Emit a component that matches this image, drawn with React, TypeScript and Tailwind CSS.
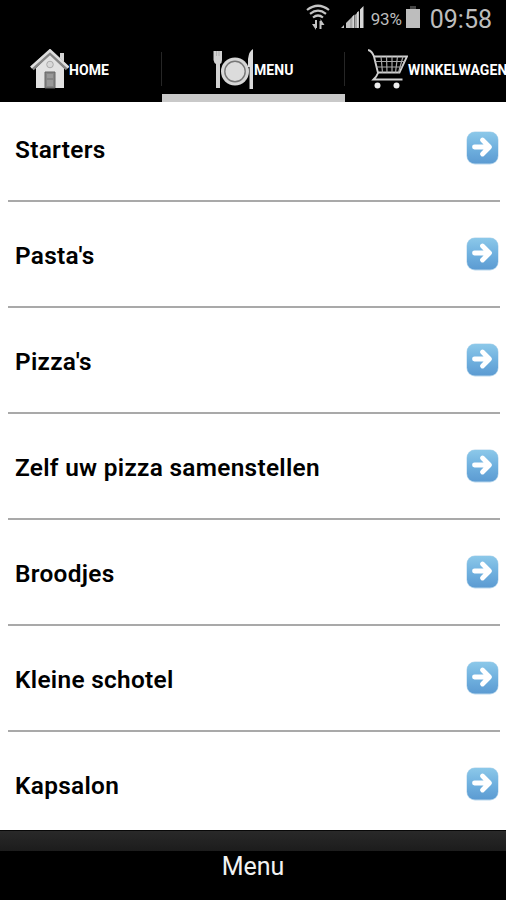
import clsx from 'clsx'
import type { ReactNode } from 'react'

const CATEGORIES = [
  'Starters',
  "Pasta's",
  "Pizza's",
  'Zelf uw pizza samenstellen',
  'Broodjes',
  'Kleine schotel',
  'Kapsalon',
]

export default function App() {
  return (
    <div className="flex h-[900px] w-[506px] flex-col overflow-hidden bg-white font-['Roboto',sans-serif]">
      <header className="relative z-10 h-[102px] shrink-0 bg-black">
        <StatusBar />
        <nav className="flex h-16">
          <Tab label="HOME" icon={<HouseIcon />} className="w-[162px] pl-[30px]" />
          <Tab
            label="MENU"
            icon={<PlateIcon />}
            className="w-[183px] pl-[51px]"
            divided
            active
          />
          <Tab
            label="WINKELWAGEN"
            icon={<CartIcon />}
            className="w-[184px] pl-[23px]"
            divided
          />
        </nav>
      </header>
      <ul className="-mt-1.5 h-[734px] shrink-0 overflow-hidden pr-[6px] pl-2">
        {CATEGORIES.map((name) => (
          <CategoryRow key={name} name={name} />
        ))}
      </ul>
      <footer className="h-[70px] shrink-0 border-t border-[#080808] bg-black">
        <div className="h-5 bg-linear-to-b from-[#292929] to-[#1c1c1c]" />
        <p className="text-center text-[25px] leading-[32px] text-[#f2f2f2]">Menu</p>
      </footer>
    </div>
  )
}

function StatusBar() {
  return (
    <div className="flex h-[38px] items-center justify-end pr-[14px] text-[#bdbdbd]">
      <WifiIcon />
      <SignalIcon />
      <span className="w-[35px] text-[17px] leading-none tracking-[-0.2px]">93%</span>
      <svg width="14" height="23" viewBox="0 0 14 23" className="mr-[10px] mb-1">
        <path d="M4 0h6v3H4z" fill="#444" />
        <path d="M0 3h14v19H0z" fill="#bdbdbd" />
      </svg>
      <span className="text-[25px] leading-none">09:58</span>
    </div>
  )
}

type TabProps = {
  label: string
  icon: ReactNode
  className: string
  divided?: boolean
  active?: boolean
}

function Tab({ label, icon, className, divided, active }: TabProps) {
  return (
    <div
      className={clsx(
        'relative flex h-16 shrink-0 items-center border-b-8',
        active ? 'border-[#c9c9c9]' : 'border-black',
        className,
      )}
    >
      {divided && (
        <span className="absolute top-[14px] -left-px h-[34px] w-px bg-[#262626]" />
      )}
      <span className="mt-1.5 flex items-center">
        {icon}
        <span className="pt-px text-[14px] leading-none font-bold tracking-[0.1px] whitespace-nowrap text-white">
          {label}
        </span>
      </span>
    </div>
  )
}

function CategoryRow({ name }: { name: string }) {
  return (
    <li className="flex h-[106px] items-center justify-between border-b-2 border-[#a9a9a9] pr-[1px] pl-[7px]">
      <span className="pt-1 text-[24.4px] font-semibold tracking-[0.3px] text-black">{name}</span>
      <ArrowIcon />
    </li>
  )
}

function ArrowIcon() {
  return (
    <svg width="33" height="34" viewBox="0 0 33 34" className="mb-px">
      <defs>
        <linearGradient id="arrow-bg" x1="0" y1="0" x2="0" y2="1">
          <stop offset="0" stopColor="#8cc8e9" />
          <stop offset="0.5" stopColor="#70b1df" />
          <stop offset="1" stopColor="#5c9bd2" />
        </linearGradient>
      </defs>
      <rect x="0.5" y="0.5" width="32" height="33" rx="8.5" fill="#b9d8ed" />
      <rect x="1" y="1" width="31" height="31.5" rx="8" fill="url(#arrow-bg)" />
      <path
        d="M8.500 16h14M16.500 9l7 7-7 7"
        fill="none"
        stroke="#fff"
        strokeWidth="4.800"
        strokeLinecap="round"
        strokeLinejoin="round"
      />
    </svg>
  )
}

function WifiIcon() {
  return (
    <svg
      width="24"
      height="27"
      viewBox="0 0 24 27"
      fill="none"
      stroke="#c4c4c4"
      strokeWidth="2.200"
      className="mr-[10px] mb-1"
    >
      <path d="M1 6q11-8.500 22 0M4 9.800q8-6.200 16 0M7 13.500q5-4 10 0" />
      <path d="M10 16v8M14.500 25v-8" strokeWidth="2" />
      <path d="M6 20h4v6zM18.500 21h-4v-6z" fill="#c4c4c4" stroke="none" />
    </svg>
  )
}

function SignalIcon() {
  return (
    <svg width="24" height="24" viewBox="0 0 24 24" className="mr-[7px] mb-1">
      <path d="M1 23h3v-3zM6 23h4v-9l-4 4z" fill="#c4c4c4" />
      <path d="M10 23h4V10l-4 4zM15 23h4V6l-4 4z" fill="#a8a8a8" />
      <path d="M12.500 23h2V9.500l-2 2zM17 23h1.500V6L17 7.500zM20 23h3.500V1L20 4.500z" fill="#d8d8d8" />
    </svg>
  )
}

function HouseIcon() {
  return (
    <svg width="39" height="40" viewBox="0 0 39 40">
      <path d="M30 4h4v13l-4-4z" fill="#d5d5d5" />
      <path d="M6 19 20 5l14 14v20H6z" fill="#e2e2e2" />
      <path
        d="M2 19.500 20 3l17.500 16.500"
        fill="none"
        stroke="#858585"
        strokeWidth="5"
      />
      <path
        d="M1 18.500 20 1.500l18.500 17"
        fill="none"
        stroke="#dedede"
        strokeWidth="2.500"
      />
      <circle cx="20" cy="15.500" r="3.300" fill="#d8d8d8" stroke="#aaa" />
      <path d="M15 23h10v16H15z" fill="#858585" stroke="#666" />
      <path d="M17 25h6v4h-6zM17 31h6v6h-6z" fill="#989898" />
    </svg>
  )
}

function PlateIcon() {
  return (
    <svg width="41" height="40" viewBox="0 0 41 40">
      <path d="M.5 2h8.500v9q0 3-2 4v24H3V15q-2-1-2.500-4z" fill="#d2d2d2" />
      <path d="M3.500 2v5M6 2v5" stroke="#aaa" strokeWidth="0.800" />
      <path d="M40 0v40h-3.500V18H35v-8Q36 2 40 0z" fill="#dadada" />
      <circle cx="22" cy="22.500" r="14" fill="#d6d6d6" />
      <circle cx="22" cy="22.500" r="10.200" fill="#dcdcdc" stroke="#777" strokeWidth="1.400" />
    </svg>
  )
}

function CartIcon() {
  return (
    <svg width="40" height="40" viewBox="0 0 40 40" fill="none" stroke="#d0d0d0">
      <path d="M0 1q4 1 6 6.500l4 16.500q-1 3-4.500 6.500h29" strokeWidth="1.900" />
      <path d="M6 7.500h33L31.500 23.500H10" strokeWidth="1.800" />
      <path
        d="M7.500 12.500h29M8.800 18h25.500M13 7.500l1.500 16M18.500 7.500l.5 16M24 7.500v16M29.500 7.500l-2 16M35 7.500l-4.500 16"
        stroke="#a5a5a5"
        strokeWidth="1.200"
      />
      <circle cx="9.500" cy="36.500" r="3" fill="#eee" stroke="none" />
      <circle cx="28.500" cy="36.500" r="3" fill="#eee" stroke="none" />
    </svg>
  )
}
